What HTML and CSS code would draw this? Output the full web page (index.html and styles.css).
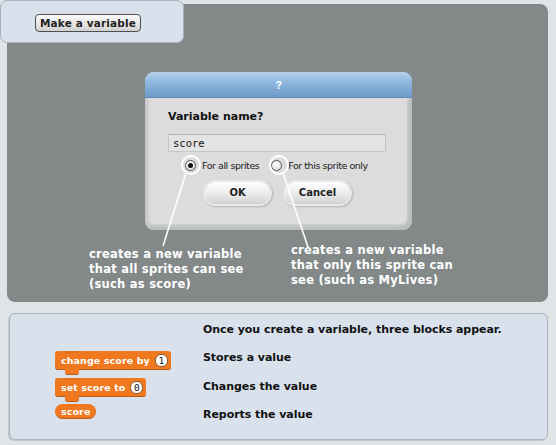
FILE: index.html
```html
<!DOCTYPE html>
<html>
<head>
<meta charset="utf-8">
<link rel="stylesheet" href="styles.css">
</head>
<body>
<div class="page">
  <div class="intro"><span class="make-btn">Make a variable</span></div>
  <div class="stage">
    <div class="dialog">
      <div class="dlg-title">?</div>
      <div class="dlg-body">
        <div class="dlg-label">Variable name?</div>
        <div class="dlg-input">score</div>
        <div class="dlg-radios">
          <span class="radio-opt"><span class="radio checked"></span>For all sprites</span>
          <span class="radio-opt"><span class="radio"></span>For this sprite only</span>
        </div>
        <div class="dlg-buttons">
          <span class="pill-btn">OK</span>
          <span class="pill-btn">Cancel</span>
        </div>
      </div>
    </div>
    <div class="notes">
      <p class="note note-left">creates a new variable<br>that all sprites can see<br>(such as score)</p>
      <p class="note note-right">creates a new variable<br>that only this sprite can<br>see (such as MyLives)</p>
    </div>
  </div>
  <div class="blocks-panel">
    <div class="cell"></div>
    <div class="cell desc">Once you create a variable, three blocks appear.</div>
    <div class="cell"><span class="block stack b1">change score by <span class="num">1</span></span></div>
    <div class="cell desc">Stores a value</div>
    <div class="cell"><span class="block stack b2">set score to <span class="num">0</span></span></div>
    <div class="cell desc">Changes the value</div>
    <div class="cell"><span class="block reporter b3">score</span></div>
    <div class="cell desc">Reports the value</div>
  </div>
  <svg class="callouts" width="556" height="445" viewBox="0 0 556 445">
    <circle cx="191" cy="165" r="9" fill="none" stroke="#fff" stroke-width="2"/>
    <circle cx="279" cy="165" r="9" fill="none" stroke="#fff" stroke-width="2"/>
    <line x1="186" y1="173" x2="163" y2="246" stroke="#fff" stroke-width="1.6"/>
    <line x1="283" y1="173" x2="308" y2="247" stroke="#fff" stroke-width="1.6"/>
  </svg>
</div>
</body>
</html>
```
FILE: styles.css
```css
* { box-sizing: border-box; }
html, body { margin: 0; padding: 0; }
body { background: #e1e4e7; font-family: "DejaVu Sans", sans-serif; }
.page { position: relative; width: 556px; height: 445px; overflow: hidden; padding-top: 4px; }

.intro {
  position: absolute; left: 0; top: 0; width: 184px; height: 43px;
  background: #d9e2ec; border: 1px solid #aab3bc; border-radius: 7px;
  padding: 11px 0 0 34px; z-index: 2;
}
.make-btn {
  display: inline-block; width: 106px; height: 18px;
  border: 1px solid #4d4f52; border-radius: 4px;
  background: linear-gradient(#fbfbfb, #e4e4e4 60%, #cfcfcf);
  font: bold 10.5px "DejaVu Sans", sans-serif; color: #222;
  text-align: center; line-height: 16px; letter-spacing: 0.15px;
}

.stage {
  margin-left: 7px; width: 541px; height: 298px;
  background: #838889; border-radius: 8px;
  padding-top: 68px;
}
.dialog {
  margin-left: 138px; width: 267px; height: 158px;
  border-radius: 9px; background: #d4d4d4;
  box-shadow: inset -4px -4px 4px #b9bbbd, inset 3px 0 3px #c9c9c9;
  overflow: hidden;
}
.dlg-title {
  height: 26px; background: linear-gradient(#b4d0ec, #8db5de 45%, #6d9bcb);
  color: #fff; text-align: center; font: bold 11px "Liberation Sans", sans-serif; line-height: 26px;
  border-bottom: 1px solid #5f89b6;
}
.dlg-body { padding: 11px 0 0 19px; background: #dcdcdc; margin: 0 5px 5px 4px; height: 126px; border-radius: 0 0 6px 6px; }
.dlg-label { font: bold 11px "DejaVu Sans", sans-serif; color: #111; height: 16px; line-height: 16px; }
.dlg-input {
  margin-top: 9px; width: 218px; height: 18px;
  background: #e3e3e3; border: 1px solid #c6c6c6; border-top-color: #b4b4b4;
  font: 10.5px "DejaVu Sans Mono", monospace; color: #111; line-height: 16px; padding-left: 4px;
}
.dlg-radios { display: flex; gap: 12px; margin-top: 6px; margin-left: 17px; height: 14px; align-items: center; }
.radio-opt { display: flex; align-items: center; gap: 6px; font: 9.5px "DejaVu Sans", sans-serif; color: #222; letter-spacing: -0.45px; }
.radio {
  width: 11px; height: 11px; border-radius: 50%;
  border: 1px solid #555; background: radial-gradient(circle at 40% 35%, #fff, #d8d8d8);
  display: inline-block; position: relative;
}
.radio.checked::after {
  content: ""; position: absolute; left: 2px; top: 2px; width: 5px; height: 5px; border-radius: 50%; background: #111;
}
.dlg-buttons { display: flex; gap: 15px; margin-top: 10px; margin-left: 37px; }
.pill-btn {
  display: inline-block; width: 65px; height: 22px; border-radius: 11px;
  background: linear-gradient(#ffffff, #ececec 50%, #d2d2d2);
  box-shadow: 0 0 0 2px #e9e9e9, 1px 1px 2px 2px #b3b3b3;
  font: bold 10px "DejaVu Sans", sans-serif; color: #222; text-align: center; line-height: 22px;
}

.notes { display: flex; color: #fff; font: bold 11.5px "DejaVu Sans", sans-serif; letter-spacing: 0.25px; }
.note { margin: 0; line-height: 15px; }
.note-left { margin-left: 82px; margin-top: 17px; width: 202px; }
.note-right { margin-top: 13px; }

.blocks-panel {
  margin: 11px 0 0 9px; width: 539px; height: 127px;
  background: #d9e2ec; border: 1px solid #a9b1ba; border-radius: 6px;
  box-shadow: -1px 1px 0 #c3c9cf;
  display: grid; grid-template-columns: 193px auto;
  grid-template-rows: 28px 29px 28px 29px; padding-top: 1px;
}
.cell { display: flex; align-items: center; padding-left: 45px; }
.desc { padding-left: 0; font: bold 11px "DejaVu Sans", sans-serif; color: #111; letter-spacing: -0.05px; }

.block {
  display: inline-flex; align-items: center; position: relative;
  background: #f0781f; color: #fff; font: bold 9.5px "DejaVu Sans", sans-serif; letter-spacing: 0.1px;
  border-bottom: 1px solid #b85a12; white-space: nowrap;
}
.stack { height: 19px; border-radius: 3px; padding: 0 3px 0 6px; align-self: flex-start; }
.stack::after {
  content: ""; position: absolute; left: 10px; bottom: -6px; width: 14px; height: 6px;
  background: #f0781f; border-bottom: 1px solid #b85a12; border-radius: 0 0 3px 3px;
}
.stack::before {
  content: ""; position: absolute; left: 10px; top: 0; width: 14px; height: 2px;
  background: #e36d14; border-radius: 0 0 2px 2px;
}
.b1 { margin-top: 8px; }
.b2 { margin-top: 6px; }
.num {
  display: inline-block; margin-left: 5px; width: 13px; height: 13px; border-radius: 6px;
  background: #fff; color: #111; border: 1px solid #8a5a30; font: 9.5px "DejaVu Sans Mono", monospace; line-height: 11px; text-align: center;
  letter-spacing: 0;
}
.reporter { height: 15px; border-radius: 8px; padding: 0 6px; justify-content: center; align-self: flex-start; margin-top: 4px; }

.callouts { position: absolute; left: 0; top: 0; pointer-events: none; z-index: 3; }
```
